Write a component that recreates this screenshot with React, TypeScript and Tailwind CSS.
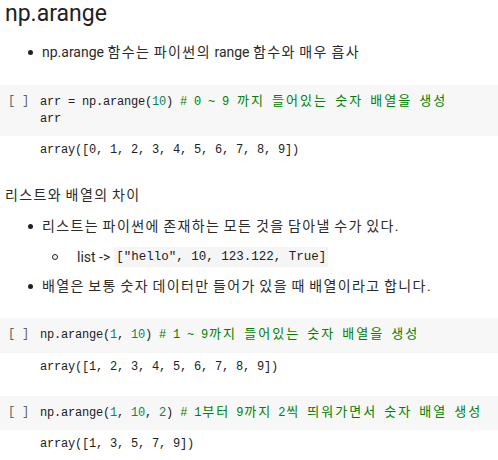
import React from "react";

const HANGUL = /([\u3131-\u318E\uAC00-\uD7A3]+)/;
const isHangul = (s: string) => /^[\u3131-\u318E\uAC00-\uD7A3]+$/.test(s);

function Mono({ text }: { text: string }) {
  const parts = text.split(HANGUL);
  return (
    <>
      {parts.map((p, i) =>
        isHangul(p) ? (
          <React.Fragment key={i}>
            {Array.from(p).map((c, j) => (
              <span
                key={j}
                className="inline-block w-[14px] text-center text-[13px] tracking-normal"
              >
                {c}
              </span>
            ))}
          </React.Fragment>
        ) : (
          <span key={i}>{p}</span>
        )
      )}
    </>
  );
}

function Body({ text }: { text: string }) {
  const parts = text.split(HANGUL);
  return (
    <>
      {parts.map((p, i) =>
        isHangul(p) ? (
          <span key={i} className="tracking-[1.4px]">
            {p}
          </span>
        ) : (
          <span key={i}>{p}</span>
        )
      )}
    </>
  );
}

const monoCls =
  "[font-family:'Liberation_Mono','Noto_Sans_CJK_KR',monospace] text-[12px] tracking-[-0.2px] leading-[17px] whitespace-pre";

function Num({ children }: { children: React.ReactNode }) {
  return <span className="text-[#098658]">{children}</span>;
}

function Comment({ text }: { text: string }) {
  return (
    <span className="text-[#008000]">
      <Mono text={text} />
    </span>
  );
}

function Cell({
  lines,
  h,
  pt,
}: {
  lines: React.ReactNode[];
  h: string;
  pt: string;
}) {
  return (
    <div className={`bg-[#f7f7f7] flex ${h} ${pt}`}>
      <div className={`w-[40px] pl-[8px] text-[#616161] ${monoCls}`}>[ ]</div>
      <div className={`text-[#212121] ${monoCls}`}>
        {lines.map((l, i) => (
          <div key={i}>{l}</div>
        ))}
      </div>
    </div>
  );
}

function Output({ text, cls }: { text: string; cls: string }) {
  return (
    <div className={`pl-[40px] text-[#212121] ${monoCls} ${cls}`}>{text}</div>
  );
}

function Bullet({ text, cls }: { text: string; cls: string }) {
  return (
    <div className={`flex items-center h-[20px] ${cls}`}>
      <span className="ml-[28px] w-[5px] h-[5px] rounded-full bg-[#212121]" />
      <span className="ml-[9px]">
        <Body text={text} />
      </span>
    </div>
  );
}

export default function App() {
  return (
    <div className="w-[498px] h-[460px] overflow-hidden bg-white text-[#2a2a2a] [font-family:Roboto,'Noto_Sans_CJK_KR',sans-serif] text-[14px]">
      <h2 className="pl-[5px] text-[23px] leading-[28px] h-[28px] font-normal text-[#212121]">
        np.arange
      </h2>
      <Bullet cls="mt-[14px]" text="np.arange 함수는 파이썬의 range 함수와 매우 흡사" />

      <div className="mt-[23px]">
        <Cell
          h="h-[51px]"
          pt="pt-[8px]"
          lines={[
            <>
              arr = np.arange(<Num>10</Num>) <Comment text="# 0 ~ 9 까지 들어있는 숫자 배열을 생성" />
            </>,
            <>arr</>,
          ]}
        />
      </div>
      <Output cls="pt-[6px]" text="array([0, 1, 2, 3, 4, 5, 6, 7, 8, 9])" />

      <div className="mt-[26px] pl-[5px] h-[20px] leading-[20px]">
        <Body text="리스트와 배열의 차이" />
      </div>
      <Bullet cls="mt-[11px]" text="리스트는 파이썬에 존재하는 모든 것을 담아낼 수가 있다." />
      <div className="flex items-center h-[20px] mt-[11px]">
        <span className="ml-[52px] w-[6px] h-[6px] rounded-full border border-[#212121]" />
        <span className="ml-[19px]">list -&gt;</span>
        <span className="ml-[4px] bg-[#f5f5f5] px-[2px] [font-family:'Liberation_Mono','Noto_Sans_CJK_KR',monospace] text-[12.5px] leading-[20px] whitespace-pre text-[#212121]">
          ["hello", 10, 123.122, True]
        </span>
      </div>
      <Bullet cls="mt-[9px]" text="배열은 보통 숫자 데이터만 들어가 있을 때 배열이라고 합니다." />

      <div className="mt-[22px]">
        <Cell
          h="h-[35px]"
          pt="pt-[8px]"
          lines={[
            <>
              np.arange(<Num>1</Num>, <Num>10</Num>) <Comment text="# 1 ~ 9까지 들어있는 숫자 배열을 생성" />
            </>,
          ]}
        />
      </div>
      <Output cls="pt-[6px]" text="array([1, 2, 3, 4, 5, 6, 7, 8, 9])" />

      <div className="mt-[20px]">
        <Cell
          h="h-[34px]"
          pt="pt-[8px]"
          lines={[
            <>
              np.arange(<Num>1</Num>, <Num>10</Num>, <Num>2</Num>){" "}
              <Comment text="# 1부터 9까지 2씩 띄워가면서 숫자 배열 생성" />
            </>,
          ]}
        />
      </div>
      <Output cls="pt-[6px]" text="array([1, 3, 5, 7, 9])" />
    </div>
  );
}
